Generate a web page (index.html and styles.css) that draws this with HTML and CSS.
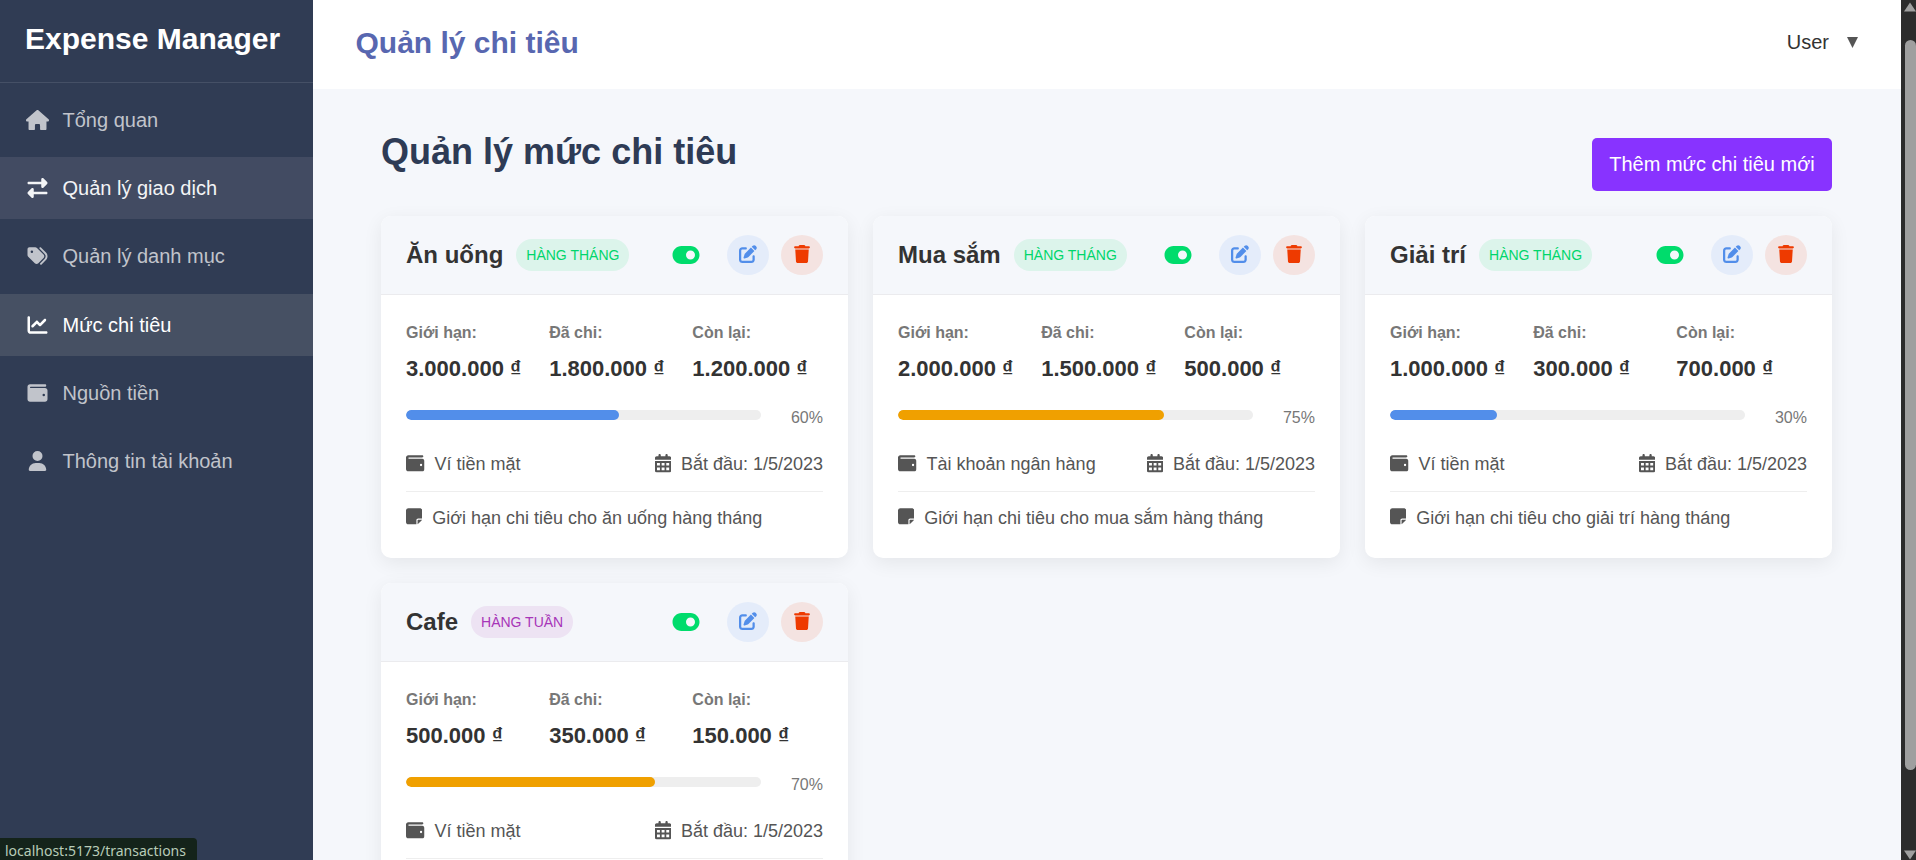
FILE: index.html
```html
<!DOCTYPE html>
<html lang="vi">
<head>
<meta charset="utf-8">
<title>Expense Manager</title>
<link rel="stylesheet" href="styles.css">
</head>
<body>
<svg class="sprite" aria-hidden="true">
  <symbol id="house" viewBox="0 0 576 512"><path d="M575.8 255.5c0 18-15 32.1-32 32.1h-32l.7 160.2c0 2.700-.2 5.400-.5 8.100V472c0 22.100-17.900 40-40 40H456c-1.100 0-2.200 0-3.300-.1c-1.400 .1-2.800 .1-4.200 .1H416 392c-22.100 0-40-17.900-40-40V448 384c0-17.700-14.300-32-32-32H256c-17.700 0-32 14.300-32 32v64 24c0 22.100-17.900 40-40 40H160 128.100c-1.500 0-3-.1-4.500-.2c-1.200 .1-2.400 .2-3.600 .2H104c-22.100 0-40-17.900-40-40V360c0-.9 0-1.900 .1-2.800V287.600H32c-18 0-32-14-32-32.100c0-9 3-17 10-24L266.400 8c7-7 15-8 22-8s15 2 21 7L564.800 231.500c8 7 12 15 11 24z"/></symbol>
  <symbol id="exchange" viewBox="0 0 512 512"><path d="M32 96l320 0V32c0-12.900 7.800-24.600 19.800-29.600s25.700-2.200 34.900 6.900l96 96c6 6 9.400 14.100 9.400 22.600s-3.400 16.600-9.400 22.600l-96 96c-9.200 9.200-22.900 11.900-34.900 6.900s-19.800-16.600-19.800-29.600V160L32 160c-17.700 0-32-14.300-32-32s14.300-32 32-32zM480 352c17.700 0 32 14.300 32 32s-14.300 32-32 32H160v64c0 12.900-7.800 24.600-19.800 29.600s-25.700 2.200-34.900-6.900l-96-96c-6-6-9.400-14.100-9.400-22.600s3.400-16.600 9.400-22.600l96-96c9.200-9.200 22.900-11.900 34.900-6.900s19.800 16.600 19.800 29.600l0 64H480z"/></symbol>
  <symbol id="tags" viewBox="0 0 512 512"><path d="M345 39.100L472.800 168.400c52.400 53 52.400 138.200 0 191.200L360.800 472.900c-9.300 9.400-24.500 9.500-33.900 .2s-9.500-24.500-.2-33.900L438.600 325.900c33.900-34.300 33.900-89.400 0-123.700L310.900 72.900c-9.300-9.400-9.200-24.600 .2-33.900s24.600-9.200 33.900 .2zM0 229.500V80C0 53.500 21.500 32 48 32H197.500c17 0 33.300 6.700 45.300 18.700l168 168c25 25 25 65.500 0 90.500L277.300 442.700c-25 25-65.500 25-90.500 0l-168-168C6.700 262.700 0 246.500 0 229.500zM144 144a32 32 0 1 0 -64 0 32 32 0 1 0 64 0z"/></symbol>
  <symbol id="chart" viewBox="0 0 512 512"><path d="M64 64c0-17.700-14.300-32-32-32S0 46.300 0 64V400c0 44.200 35.800 80 80 80H480c17.700 0 32-14.300 32-32s-14.300-32-32-32H80c-8.800 0-16-7.200-16-16V64zm406.600 86.600c12.500-12.500 12.500-32.800 0-45.300s-32.800-12.500-45.300 0L320 210.700l-57.400-57.400c-12.500-12.500-32.800-12.500-45.300 0l-112 112c-12.500 12.500-12.500 32.800 0 45.300s32.800 12.500 45.300 0L240 221.300l57.400 57.400c12.500 12.500 32.800 12.500 45.300 0l128-128z"/></symbol>
  <symbol id="wallet" viewBox="0 0 512 512"><path d="M64 32C28.700 32 0 60.700 0 96V416c0 35.300 28.700 64 64 64H448c35.300 0 64-28.700 64-64V192c0-35.300-28.700-64-64-64H80c-8.800 0-16-7.200-16-16s7.200-16 16-16H448c17.700 0 32-14.300 32-32s-14.300-32-32-32H64zM416 272a32 32 0 1 1 0 64 32 32 0 1 1 0-64z"/></symbol>
  <symbol id="user" viewBox="0 0 448 512"><path d="M224 256A128 128 0 1 0 224 0a128 128 0 1 0 0 256zm-45.700 48C79.800 304 0 383.800 0 482.300C0 498.700 13.300 512 29.700 512H418.300c16.400 0 29.700-13.300 29.700-29.700C448 383.800 368.200 304 269.700 304H178.300z"/></symbol>
  <symbol id="toggle" viewBox="0 0 576 512"><path d="M192 64C86 64 0 150 0 256S86 448 192 448H384c106 0 192-86 192-192s-86-192-192-192H192zm192 96a96 96 0 1 1 0 192 96 96 0 1 1 0-192z"/></symbol>
  <symbol id="edit" viewBox="0 0 512 512"><path d="M471.600 21.700c-21.900-21.900-57.300-21.900-79.200 0L362.300 51.700l97.900 97.900 30.100-30.100c21.900-21.900 21.900-57.300 0-79.200L471.600 21.700zm-299.200 220c-6.100 6.100-10.800 13.600-13.500 21.900l-29.600 88.800c-2.900 8.600-.6 18.100 5.800 24.600s15.900 8.700 24.600 5.800l88.800-29.600c8.200-2.700 15.700-7.400 21.900-13.500L437.700 172.300 339.700 74.300 172.400 241.700zM96 64C43 64 0 107 0 160V416c0 53 43 96 96 96H352c53 0 96-43 96-96V320c0-17.700-14.300-32-32-32s-32 14.300-32 32v96c0 17.700-14.300 32-32 32H96c-17.700 0-32-14.300-32-32V160c0-17.700 14.300-32 32-32h96c17.700 0 32-14.300 32-32s-14.300-32-32-32H96z"/></symbol>
  <symbol id="trash" viewBox="0 0 448 512"><path d="M135.200 17.700L128 32H32C14.300 32 0 46.300 0 64S14.300 96 32 96H416c17.700 0 32-14.300 32-32s-14.300-32-32-32H320l-7.200-14.300C307.400 6.800 296.300 0 284.200 0H163.800c-12.100 0-23.200 6.800-28.600 17.700zM416 128H32L53.200 467c1.600 25.300 22.600 45 47.900 45H346.900c25.300 0 46.300-19.700 47.900-45L416 128z"/></symbol>
  <symbol id="calendar" viewBox="0 0 448 512"><path d="M128 0c17.700 0 32 14.300 32 32V64H288V32c0-17.700 14.300-32 32-32s32 14.300 32 32V64h48c26.500 0 48 21.500 48 48v48H0V112C0 85.500 21.500 64 48 64H96V32c0-17.700 14.300-32 32-32zM0 192H448V464c0 26.500-21.500 48-48 48H48c-26.500 0-48-21.500-48-48V192zm56 56v72h80v-72zm128 0v72h80v-72zm128 0v72h80v-72zM56 376v72h80v-72zm128 0v72h80v-72zm128 0v72h80v-72z"/></symbol>
  <symbol id="note" viewBox="0 0 448 512"><path d="M64 32C28.700 32 0 60.700 0 96V416c0 35.300 28.700 64 64 64H288V368c0-26.500 21.500-48 48-48H448V96c0-35.300-28.700-64-64-64H64zM448 352H402.700 336c-8.800 0-16 7.200-16 16v66.700V480l32-32 64-64 32-32z"/></symbol>
</svg>

<div class="app">
  <aside class="sidebar">
    <div class="brand">Expense Manager</div>
    <nav class="nav">
      <a class="nav-item"><svg class="nav-icon nav-icon-house"><use href="#house"/></svg><span>Tổng quan</span></a>
      <a class="nav-item hovered"><svg class="nav-icon"><use href="#exchange"/></svg><span>Quản lý giao dịch</span></a>
      <a class="nav-item"><svg class="nav-icon"><use href="#tags"/></svg><span>Quản lý danh mục</span></a>
      <a class="nav-item active"><svg class="nav-icon"><use href="#chart"/></svg><span>Mức chi tiêu</span></a>
      <a class="nav-item"><svg class="nav-icon"><use href="#wallet"/></svg><span>Nguồn tiền</span></a>
      <a class="nav-item"><svg class="nav-icon"><use href="#user"/></svg><span>Thông tin tài khoản</span></a>
    </nav>
  </aside>

  <div class="main">
    <header class="topbar">
      <h1 class="topbar-title">Quản lý chi tiêu</h1>
      <div class="user-menu"><span>User</span><svg class="caret" viewBox="0 0 11 11"><path d="M0 0h11L5.500 11z"/></svg></div>
    </header>

    <main class="content">
      <div class="page-head">
        <h2 class="page-title">Quản lý mức chi tiêu</h2>
        <button class="add-button">Thêm mức chi tiêu mới</button>
      </div>

      <div class="cards">
        <article class="card">
          <div class="card-head">
            <h3 class="card-name">Ăn uống</h3><span class="badge monthly">HÀNG THÁNG</span>
            <div class="actions">
              <svg class="toggle"><use href="#toggle"/></svg>
              <span class="round edit"><svg><use href="#edit"/></svg></span>
              <span class="round trash"><svg><use href="#trash"/></svg></span>
            </div>
          </div>
          <div class="card-body">
            <div class="amounts">
              <div><div class="label">Giới hạn:</div><div class="value">3.000.000 ₫</div></div>
              <div><div class="label">Đã chi:</div><div class="value">1.800.000 ₫</div></div>
              <div><div class="label">Còn lại:</div><div class="value">1.200.000 ₫</div></div>
            </div>
            <div class="progress"><div class="track"><div class="fill blue" style="width:60%"></div></div><span class="percent">60%</span></div>
            <div class="details">
              <span class="detail"><svg class="icon-wide"><use href="#wallet"/></svg>Ví tiền mặt</span>
              <span class="detail"><svg class="icon-slim"><use href="#calendar"/></svg>Bắt đầu: 1/5/2023</span>
            </div>
            <div class="note"><svg class="icon-slim"><use href="#note"/></svg><span>Giới hạn chi tiêu cho ăn uống hàng tháng</span></div>
          </div>
        </article>

        <article class="card">
          <div class="card-head">
            <h3 class="card-name">Mua sắm</h3><span class="badge monthly">HÀNG THÁNG</span>
            <div class="actions">
              <svg class="toggle"><use href="#toggle"/></svg>
              <span class="round edit"><svg><use href="#edit"/></svg></span>
              <span class="round trash"><svg><use href="#trash"/></svg></span>
            </div>
          </div>
          <div class="card-body">
            <div class="amounts">
              <div><div class="label">Giới hạn:</div><div class="value">2.000.000 ₫</div></div>
              <div><div class="label">Đã chi:</div><div class="value">1.500.000 ₫</div></div>
              <div><div class="label">Còn lại:</div><div class="value">500.000 ₫</div></div>
            </div>
            <div class="progress"><div class="track"><div class="fill orange" style="width:75%"></div></div><span class="percent">75%</span></div>
            <div class="details">
              <span class="detail"><svg class="icon-wide"><use href="#wallet"/></svg>Tài khoản ngân hàng</span>
              <span class="detail"><svg class="icon-slim"><use href="#calendar"/></svg>Bắt đầu: 1/5/2023</span>
            </div>
            <div class="note"><svg class="icon-slim"><use href="#note"/></svg><span>Giới hạn chi tiêu cho mua sắm hàng tháng</span></div>
          </div>
        </article>

        <article class="card">
          <div class="card-head">
            <h3 class="card-name">Giải trí</h3><span class="badge monthly">HÀNG THÁNG</span>
            <div class="actions">
              <svg class="toggle"><use href="#toggle"/></svg>
              <span class="round edit"><svg><use href="#edit"/></svg></span>
              <span class="round trash"><svg><use href="#trash"/></svg></span>
            </div>
          </div>
          <div class="card-body">
            <div class="amounts">
              <div><div class="label">Giới hạn:</div><div class="value">1.000.000 ₫</div></div>
              <div><div class="label">Đã chi:</div><div class="value">300.000 ₫</div></div>
              <div><div class="label">Còn lại:</div><div class="value">700.000 ₫</div></div>
            </div>
            <div class="progress"><div class="track"><div class="fill blue" style="width:30%"></div></div><span class="percent">30%</span></div>
            <div class="details">
              <span class="detail"><svg class="icon-wide"><use href="#wallet"/></svg>Ví tiền mặt</span>
              <span class="detail"><svg class="icon-slim"><use href="#calendar"/></svg>Bắt đầu: 1/5/2023</span>
            </div>
            <div class="note"><svg class="icon-slim"><use href="#note"/></svg><span>Giới hạn chi tiêu cho giải trí hàng tháng</span></div>
          </div>
        </article>

        <article class="card">
          <div class="card-head">
            <h3 class="card-name">Cafe</h3><span class="badge weekly">HÀNG TUẦN</span>
            <div class="actions">
              <svg class="toggle"><use href="#toggle"/></svg>
              <span class="round edit"><svg><use href="#edit"/></svg></span>
              <span class="round trash"><svg><use href="#trash"/></svg></span>
            </div>
          </div>
          <div class="card-body">
            <div class="amounts">
              <div><div class="label">Giới hạn:</div><div class="value">500.000 ₫</div></div>
              <div><div class="label">Đã chi:</div><div class="value">350.000 ₫</div></div>
              <div><div class="label">Còn lại:</div><div class="value">150.000 ₫</div></div>
            </div>
            <div class="progress"><div class="track"><div class="fill orange" style="width:70%"></div></div><span class="percent">70%</span></div>
            <div class="details">
              <span class="detail"><svg class="icon-wide"><use href="#wallet"/></svg>Ví tiền mặt</span>
              <span class="detail"><svg class="icon-slim"><use href="#calendar"/></svg>Bắt đầu: 1/5/2023</span>
            </div>
            <div class="note"></div>
          </div>
        </article>
      </div>
    </main>
  </div>

  <div class="scrollbar">
    <svg class="arrow" viewBox="0 0 12 10"><path d="M6 0.500L12 9.500H0z"/></svg>
    <div class="thumb"></div>
    <svg class="arrow" viewBox="0 0 12 10"><path d="M0 0.500H12L6 9.500z"/></svg>
  </div>
</div>
<div class="status">localhost:5173/transactions</div>
</body>
</html>
```
FILE: styles.css
```css
* { box-sizing: border-box; }

body {
  margin: 0;
  height: 860px;
  overflow: hidden;
  font-family: "Liberation Sans", Arial, sans-serif;
  color: #333;
  background: #f5f7fb;
}

h1, h2, h3 { margin: 0; }
svg { fill: currentColor; display: block; flex: none; }
.sprite { position: absolute; width: 0; height: 0; }

.app { display: flex; height: 860px; }

.sidebar { width: 313px; flex: none; background: #303c54; }
.brand {
  height: 83px;
  padding: 21px 25px 0;
  border-bottom: 1px solid #455066;
  color: #fff;
  font-size: 30px;
  font-weight: bold;
  line-height: 35px;
  white-space: nowrap;
}
.nav { display: flex; flex-direction: column; gap: 6.25px; padding-top: 5.75px; }
.nav-item {
  display: flex;
  align-items: center;
  gap: 12.5px;
  height: 62px;
  padding-left: 25px;
  font-size: 20px;
  line-height: 24px;
  color: #c1c4cb;
}
.nav-icon { width: 25px; height: 20px; }
.nav-icon-house { height: 20.500px; }
.hovered { background: #424b62; color: #f3f4f6; }
.active { background: #465063; color: #fff; }

.main { flex: 1; min-width: 0; height: 860px; overflow: hidden; }
.topbar {
  display: flex;
  justify-content: space-between;
  height: 89px;
  padding: 25px 43px 0 42.5px;
  background: #fff;
}
.topbar-title { font-size: 30px; line-height: 35px; color: #5867b0; }
.user-menu { display: flex; align-items: center; gap: 18px; height: 34px; font-size: 20px; }
.caret { width: 11px; height: 11px; color: #555; }

.content { padding: 49px 69px 0 68px; }
.page-head { display: flex; justify-content: space-between; height: 78px; }
.page-title { font-size: 36px; line-height: 42px; margin-top: -7px; color: #2e3b55; }
.add-button {
  width: 240px;
  height: 53px;
  padding: 0;
  border: 0;
  border-radius: 5px;
  background: #8833ff;
  color: #fff;
  font: 20px "Liberation Sans", Arial, sans-serif;
}

.cards { display: grid; grid-template-columns: repeat(3, 467px); gap: 25px; }
.card {
  height: 342px;
  overflow: hidden;
  border-radius: 10px;
  background: #fff;
  box-shadow: 0 5px 19px rgba(0, 0, 0, 0.07);
}
.card-head {
  display: flex;
  align-items: center;
  height: 79px;
  padding: 0 25px;
  border-bottom: 1px solid #ebebee;
  background: #f5f7fb;
}
.card-name { font-size: 24px; line-height: 28px; }
.badge {
  height: 32px;
  margin-left: 13px;
  padding: 0 10px;
  border-radius: 16px;
  font-size: 14px;
  line-height: 32px;
}
.monthly { background: #dcf4eb; color: #00d66b; }
.weekly { background: #ede3f3; color: #a735b8; }
.actions { display: flex; align-items: center; margin-left: auto; }
.toggle { width: 28px; height: 24px; margin-right: 27px; color: #00dc6c; }
.round {
  display: flex;
  align-items: center;
  justify-content: center;
  width: 42px;
  height: 40px;
  border-radius: 50%;
}
.round svg { width: 18px; height: 18px; margin-top: -2px; }
.edit { background: #e4ecfa; color: #528eea; }
.trash { margin-left: 12px; background: #f4e3e1; color: #ee3a00; }

.card-body { padding: 28px 25px 0; }
.amounts { display: grid; grid-template-columns: repeat(3, 1fr); gap: 12.500px; white-space: nowrap; }
.label { font-size: 16px; line-height: 20px; font-weight: bold; color: #777; }
.value { margin-top: 12px; font-size: 22px; line-height: 28px; font-weight: bold; }
.progress { display: flex; justify-content: space-between; height: 20px; margin-top: 27px; }
.track { width: 355px; height: 10px; border-radius: 5px; background: #eee; overflow: hidden; }
.fill { height: 10px; border-radius: 5px; }
.blue { background: #528eea; }
.orange { background: #f0a000; }
.percent { font-size: 16px; line-height: 15px; color: #777; }
.details {
  display: flex;
  justify-content: space-between;
  height: 62px;
  padding-top: 23px;
  border-bottom: 1px solid #eee;
  color: #555;
}
.detail { display: flex; height: 22px; align-items: center; gap: 10px; font-size: 18px; line-height: 22px; }
.detail svg { margin-top: -1px; }
.icon-wide { width: 18.500px; height: 18.500px; }
.icon-slim { width: 16.200px; height: 18.500px; }
.note { display: flex; gap: 10px; padding-top: 15px; font-size: 18px; line-height: 22px; color: #555; }

.scrollbar {
  display: flex;
  flex-direction: column;
  align-items: flex-end;
  width: 15px;
  flex: none;
  padding: 2px 0 0;
  background: #2c2c2c;
  color: #9f9f9f;
}
.arrow { width: 12px; height: 10px; }
.thumb { width: 11px; height: 730px; margin: 28px 0 80px; border-radius: 5.500px; background: #9f9f9f; }

.status {
  position: absolute;
  left: 0;
  bottom: 0;
  width: 197px;
  height: 22px;
  padding-left: 5px;
  border-radius: 0 4px 0 0;
  background: #14231a;
  color: #b8ccb8;
  font: 14px/22px "Noto Sans", "Open Sans", sans-serif;
  padding-top: 2px;
  white-space: nowrap;
}
```
